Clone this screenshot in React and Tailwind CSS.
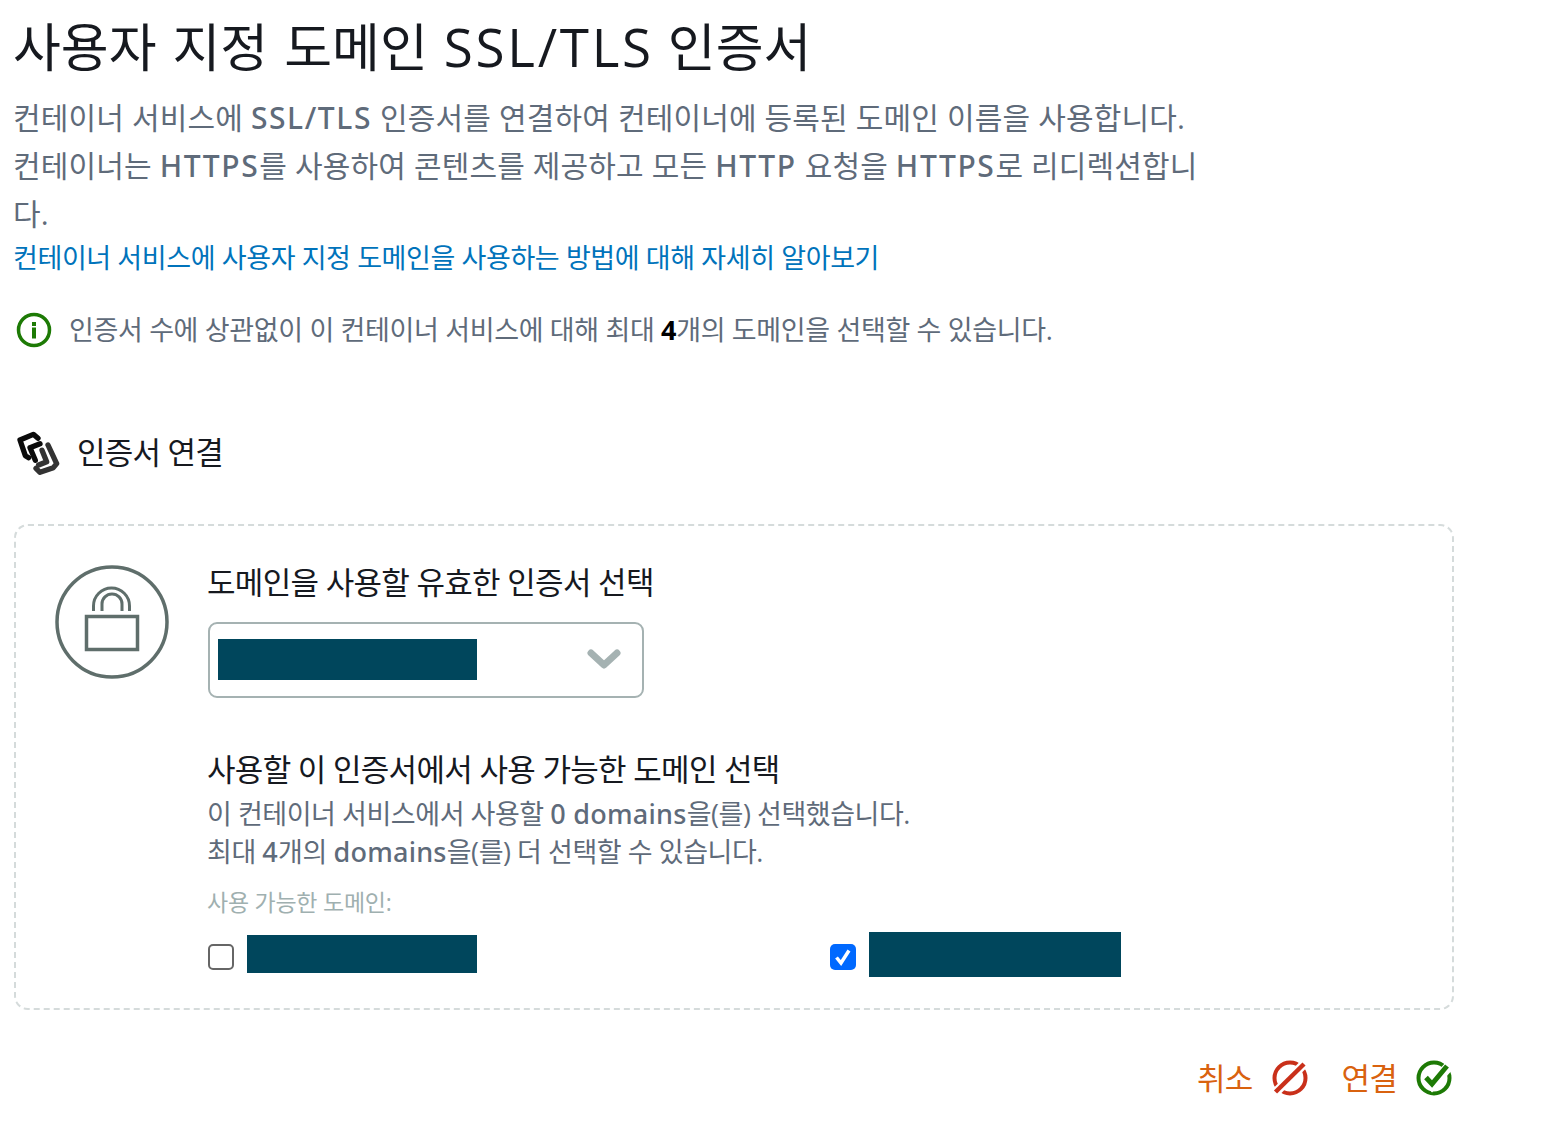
const font = { fontFamily: '"Open Sans", "Noto Sans CJK KR", sans-serif' };

function Lat({ children }) {
  return <span className="font-['Noto_Sans'] font-medium tracking-[1.6px]">{children}</span>;
}

function SubLat({ children }) {
  return <span className="font-['Noto_Sans'] font-medium tracking-[0.25px]">{children}</span>;
}

function InfoIcon() {
  return (
    <svg width="36" height="36" viewBox="0 0 36 36" className="shrink-0">
      <circle cx="18" cy="18" r="15.5" fill="none" stroke="#1d7a05" strokeWidth="3.5" />
      <rect x="16" y="10" width="4" height="4" fill="#1d7a05" />
      <rect x="16" y="15.5" width="4" height="11" fill="#1d7a05" />
    </svg>
  );
}

function LinkIcon() {
  return (
    <svg width="46" height="46" viewBox="18 12 138 138" className="shrink-0">
      <g fill="none" strokeLinejoin="round" strokeLinecap="round" strokeWidth="16">
        <path d="M84 40 L70 28 L30 45 L46 92 L56 98" stroke="#0b0b0b" />
        <path d="M76 106 L60 68 L90 56" stroke="#0b0b0b" />
        <path d="M114 60 L140 116 L130 128 L90 142 L78 130" stroke="#333333" />
        <path d="M96 76 L110 110 L86 120" stroke="#333333" />
      </g>
    </svg>
  );
}

function LockIcon() {
  return (
    <svg width="114" height="114" viewBox="0 0 114 114" className="mt-[5px] shrink-0">
      <circle cx="57" cy="57" r="55" fill="none" stroke="#5f6e6b" strokeWidth="3.5" />
      <rect x="31.5" y="51.5" width="51" height="33" fill="none" stroke="#5f6e6b" strokeWidth="3.5" />
      <path d="M38.5 46 V41 a18 18 0 0 1 36 0 V46" fill="none" stroke="#5f6e6b" strokeWidth="3" />
      <path d="M47 46 V39 a10 10 0 0 1 20 0 V46" fill="none" stroke="#5f6e6b" strokeWidth="3" />
    </svg>
  );
}

function CancelIcon() {
  return (
    <svg width="36" height="36" viewBox="0 0 36 36" className="shrink-0">
      <circle cx="18" cy="18" r="15.5" fill="none" stroke="#c9301a" strokeWidth="4" />
      <path d="M5 31 L31 5" stroke="#ffffff" strokeWidth="9" />
      <path d="M3.5 32 L32 4" stroke="#c9301a" strokeWidth="4.5" />
    </svg>
  );
}

function ConfirmIcon() {
  return (
    <svg width="36" height="36" viewBox="0 0 36 36" className="shrink-0">
      <circle cx="18" cy="18" r="15.5" fill="none" stroke="#1d7a05" strokeWidth="4" />
      <path d="M9.5 18 L16 25 L33 6" fill="none" stroke="#ffffff" strokeWidth="10" />
      <path d="M10 17.5 L16 24 L31 6" fill="none" stroke="#1d7a05" strokeWidth="5" />
    </svg>
  );
}

export default function App() {
  return (
    <div style={font} className="h-[1138px] w-[1548px] bg-white pl-[14px] pt-[16px]">
      <h1 className="-ml-px text-[52px] leading-[62px] text-[#16191f] [word-spacing:2.5px]">
        사용자 지정 도메인 <span className="-mr-[2px] text-[53px] font-normal tracking-[2.7px]">SSL/TLS</span> 인증서
      </h1>

      <p className="mt-[16px] -ml-px w-[1195px] text-[30px] leading-[48px] tracking-[0.15px] text-[#5f6b7a]">
        컨테이너 서비스에 <Lat>SSL/TLS</Lat> 인증서를 연결하여 컨테이너에 등록된 도메인 이름을 사용합니다.
        <br />
        컨테이너는 <Lat>HTTPS</Lat>를 사용하여 콘텐츠를 제공하고 모든 <Lat>HTTP</Lat> 요청을 <Lat>HTTPS</Lat>로 리디렉션합니다.
      </p>
      <a className="-ml-px mt-px block text-[27px] leading-[38px] tracking-[-0.4px] text-[#0073bb]">
        컨테이너 서비스에 사용자 지정 도메인을 사용하는 방법에 대해 자세히 알아보기
      </a>

      <div className="mt-[35px] flex items-center gap-[17px] pl-[2px]">
        <InfoIcon />
        <p className="text-[27px] leading-[36px] tracking-[-0.35px] text-[#5f6b7a]">
          인증서 수에 상관없이 이 컨테이너 서비스에 대해 최대 <b className="text-black">4</b>개의 도메인을 선택할 수 있습니다.
        </p>
      </div>

      <div className="mt-[81px] flex items-center gap-[15px] pl-[2px]">
        <LinkIcon />
        <p className="text-[31px] leading-[44px] tracking-[-0.8px] text-[#16191f]">인증서 연결</p>
      </div>

      <section className="mt-[49px] flex h-[486px] w-[1440px] gap-[39px] rounded-[14px] border-2 border-dashed border-[#d5dbdb] pl-[39px] pt-[34px]">
        <LockIcon />
        <div className="flex-1">
          <p className="-ml-px text-[31px] leading-[44px] tracking-[-0.7px] text-[#16191f]">도메인을 사용할 유효한 인증서 선택</p>
          <div className="mt-[18px] flex h-[76px] w-[436px] items-center justify-between rounded-[9px] border-2 border-[#a5b2b2] pl-[8px] pr-[21px]">
            <div className="mb-[2px] h-[41px] w-[259px] bg-[#00465c]" />
            <svg width="34" height="24" viewBox="0 0 34 24">
              <path d="M4 5 L17 17 L30 5" fill="none" stroke="#a5b2b2" strokeWidth="7" strokeLinecap="round" strokeLinejoin="round" />
            </svg>
          </div>

          <p className="-ml-px mt-[49px] text-[31px] leading-[44px] tracking-[-0.7px] text-[#16191f]">사용할 이 인증서에서 사용 가능한 도메인 선택</p>
          <div className="-ml-px mt-[4px] text-[27px] leading-[38px] tracking-[-0.45px] text-[#5f6b7a]">
            <p>이 컨테이너 서비스에서 사용할 <SubLat>0 domains</SubLat>을(를) 선택했습니다.</p>
            <p>최대 <SubLat>4</SubLat>개의 <SubLat>domains</SubLat>을(를) 더 선택할 수 있습니다.</p>
          </div>
          <p className="-ml-px mt-[15px] text-[23px] leading-[32px] tracking-[-0.25px] text-[#9fb0b0]">사용 가능한 도메인:</p>

          <div className="mt-[14px] flex items-center">
            <div className="flex w-[622px] items-center gap-[13px]">
              <span className="mt-[4px] h-[26px] w-[26px] rounded-[5px] border-2 border-[#666666] bg-white" />
              <div className="mb-[2px] h-[38px] w-[230px] bg-[#00465c]" />
            </div>
            <div className="flex items-center gap-[13px]">
              <span className="mt-[4px] flex h-[26px] w-[26px] items-center justify-center rounded-[5px] bg-[#0069ff]">
                <svg width="20" height="20" viewBox="0 0 20 20">
                  <path d="M3.5 10.5 L8 16 L16 3.5" fill="none" stroke="#ffffff" strokeWidth="3.5" />
                </svg>
              </span>
              <div className="h-[45px] w-[252px] bg-[#00465c]" />
            </div>
          </div>
        </div>
      </section>

      <div className="mt-[46px] flex w-[1438px] items-center justify-end">
        <button type="button" className="flex items-center gap-[19px] text-[31px] leading-[44px] tracking-[-0.8px] text-[#d9620f]">
          취소 <CancelIcon />
        </button>
        <button type="button" className="ml-[34px] flex items-center gap-[19px] text-[31px] leading-[44px] tracking-[-0.8px] text-[#d9620f]">
          연결 <ConfirmIcon />
        </button>
      </div>
    </div>
  );
}
